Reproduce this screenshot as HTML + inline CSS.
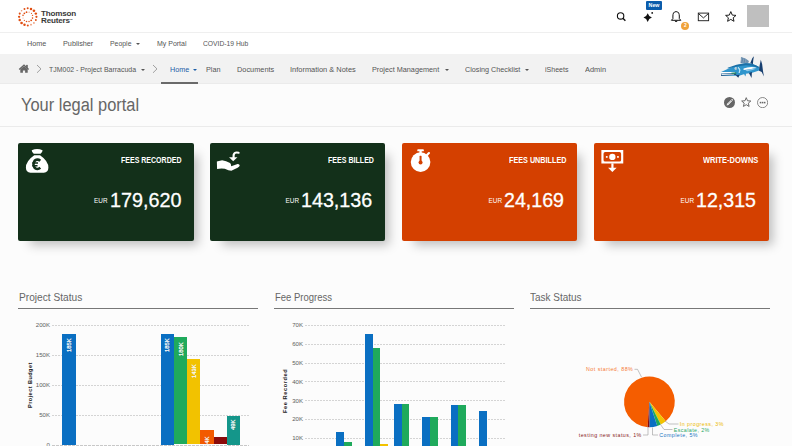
<!DOCTYPE html>
<html><head><meta charset="utf-8">
<style>
*{margin:0;padding:0;box-sizing:border-box}
html,body{width:792px;height:446px;overflow:hidden;background:#fcfcfc;font-family:"Liberation Sans",sans-serif}
.a{position:absolute;white-space:nowrap;line-height:1}
#hdr{position:absolute;left:0;top:0;width:792px;height:33px;background:#fff;border-bottom:1px solid #efefef}
#nav{position:absolute;left:0;top:33px;width:792px;height:21px;background:#fff}
#band{position:absolute;left:0;top:54px;width:792px;height:30px;background:#f2f2f2;border-bottom:1px solid #ebebeb}
#ttl{position:absolute;left:0;top:84px;width:792px;height:43px;background:#fcfcfc;border-bottom:1px solid #ebebeb}
.nv{font-size:7.8px;color:#555;top:39.7px;transform-origin:0 0}
.bc{font-size:7.8px;color:#555;top:65.5px;transform-origin:0 0}
.caret{position:absolute;width:0;height:0;border-left:2px solid transparent;border-right:2px solid transparent;border-top:2px solid #555}
.card{position:absolute;top:142.6px;width:175.6px;height:98px;border-radius:2px;box-shadow:8px 8px 10px -4px rgba(0,0,0,.25)}
.g{background:#13301a}
.o{background:#d44000}
.lab{font-weight:bold;color:#fff;top:155.4px;transform-origin:0 0}
.num{color:#fff;top:189.4px;-webkit-text-stroke:0.3px #fff;transform-origin:0 0}
.eur{font-size:6.4px;color:#fff;top:197.5px}
.sec{color:#666;top:292.1px;transform-origin:0 0}
.secl{position:absolute;top:308px;height:1px;background:#777;width:240px}
.yl{font-size:6.1px;color:#606060;text-align:right}
.grid{position:absolute;height:1px;background:repeating-linear-gradient(90deg,#d4d4d4 0 2px,transparent 2px 3px)}
.bar{position:absolute}
.vl{position:absolute;font-size:5.8px;color:#fff;letter-spacing:0.05px;text-shadow:0 0 1px rgba(0,0,0,.35);-webkit-text-stroke:0.25px #fff;transform-origin:0 0;transform:rotate(-90deg);white-space:nowrap;line-height:1}
.pl{font-size:6.3px}
</style></head><body>
<div id="hdr"></div>
<div id="nav"></div>
<div id="band"></div>
<div id="ttl"></div>

<!-- logo -->
<svg class="a" style="left:14px;top:4px" width="30" height="26" viewBox="0 0 515 446"><g fill="#e04e12"><circle cx="235" cy="72" r="17.5"/><circle cx="292" cy="85" r="21.2"/><circle cx="342" cy="115" r="22.5"/><circle cx="375" cy="165" r="21.2"/><circle cx="385" cy="220" r="18.8"/><circle cx="375" cy="275" r="16.2"/><circle cx="342" cy="325" r="15.0" opacity="0.6"/><circle cx="292" cy="355" r="15.0" opacity="0.6"/><circle cx="237" cy="370" r="17.5"/><circle cx="180" cy="355" r="21.2"/><circle cx="130" cy="325" r="22.5"/><circle cx="98" cy="275" r="21.2"/><circle cx="88" cy="220" r="20.0"/><circle cx="98" cy="165" r="17.5"/><circle cx="130" cy="115" r="13.8" opacity="0.6"/><circle cx="180" cy="85" r="16.2"/><circle cx="215" cy="140" r="15.0"/><circle cx="260" cy="140" r="11.2" opacity="0.5"/><circle cx="300" cy="160" r="10.0"/><circle cx="318" cy="195" r="12.5"/><circle cx="318" cy="242" r="13.8"/><circle cx="295" cy="280" r="16.2"/><circle cx="258" cy="300" r="12.5"/><circle cx="215" cy="300" r="13.8"/><circle cx="178" cy="280" r="11.2"/><circle cx="155" cy="240" r="10.0" opacity="0.5"/><circle cx="155" cy="195" r="13.8"/><circle cx="178" cy="160" r="15.0"/></g></svg>
<div class="a" style="left:41px;top:10.1px;font-size:8.1px;font-weight:bold;color:#3a3a3a;letter-spacing:-0.2px;line-height:7.2px">Thomson<br>Reuters<span style="font-size:3px;vertical-align:top">™</span></div>

<!-- header icons -->
<svg class="a" style="left:616px;top:11px" width="11" height="11" viewBox="616 11 11 11"><circle cx="620.6" cy="15.9" r="3.2" fill="none" stroke="#111" stroke-width="1.1"/><line x1="622.9" y1="18.2" x2="625.4" y2="20.7" stroke="#111" stroke-width="1.4"/></svg>
<svg class="a" style="left:642px;top:11px" width="12" height="12" viewBox="642 11 12 12"><path d="M647.7 13.3 Q648.7 16.6 651.9 17.6 Q648.7 18.6 647.7 21.9 Q646.7 18.6 643.5 17.6 Q646.7 16.6 647.7 13.3Z" fill="#111"/><circle cx="652.2" cy="12.9" r="0.9" fill="#111"/></svg>
<div class="a" style="left:645.9px;top:1.2px;width:16.3px;height:8.7px;background:#0b5cab;color:#fff;font-size:5.3px;font-weight:bold;text-align:center;line-height:8.7px;border-radius:1px">New</div>
<svg class="a" style="left:670px;top:10px" width="13" height="13" viewBox="670 10 13 13"><path d="M676.1 11.6 C673.4 11.6 672.9 14 672.9 16 L672.9 18.6 L671.4 20.3 L680.8 20.3 L679.3 18.6 L679.3 16 C679.3 14 678.8 11.6 676.1 11.6Z" fill="none" stroke="#111" stroke-width="1" stroke-linejoin="round"/><path d="M674.9 21 Q676.1 22.2 677.3 21" fill="#111" stroke="#111" stroke-width="0.9"/></svg>
<div class="a" style="left:681.3px;top:21.8px;width:8px;height:8px;border-radius:50%;background:#f0a23a;color:#fff;font-size:4.8px;font-weight:bold;text-align:center;line-height:8px">2</div>
<svg class="a" style="left:697px;top:12px" width="13" height="10" viewBox="697 12 13 10"><rect x="698.3" y="13.1" width="10.3" height="7.6" fill="none" stroke="#222" stroke-width="0.95"/><path d="M698.4 13.5 L703.45 17.9 L708.5 13.5" fill="none" stroke="#222" stroke-width="0.95"/></svg>
<svg class="a" style="left:725px;top:11px" width="12" height="11" viewBox="725 11 12 11"><path d="M730.8 11.6 L732.3 15.1 L736 15.4 L733.2 17.8 L734 21.3 L730.8 19.4 L727.6 21.3 L728.4 17.8 L725.6 15.4 L729.3 15.1Z" fill="none" stroke="#111" stroke-width="0.95" stroke-linejoin="round"/></svg>
<div class="a" style="left:747.1px;top:4.8px;width:22px;height:22.7px;background:#bfbfbf"></div>
<!-- nav -->
<div class="a nv" style="left:26.5px;transform:scaleX(0.928)">Home</div>
<div class="a nv" style="left:62.5px;transform:scaleX(0.932)">Publisher</div>
<div class="a nv" style="left:109.5px;transform:scaleX(0.885)">People</div>
<div class="caret" style="left:136px;top:43px"></div>
<div class="a nv" style="left:156.5px;transform:scaleX(0.896)">My Portal</div>
<div class="a nv" style="left:202.7px;transform:scaleX(0.864)">COVID-19 Hub</div>

<!-- breadcrumb band -->
<svg class="a" style="left:18px;top:63px" width="12" height="11" viewBox="18 63 12 11"><path d="M19.2 69.6 L24 65.1 L28.6 69.6" fill="none" stroke="#666" stroke-width="1.4" stroke-linejoin="miter"/><path d="M20.3 69.2 L24 65.9 L27.7 69.2 L27.7 72.8 L25.1 72.8 L25.1 70.4 L22.9 70.4 L22.9 72.8 L20.3 72.8Z" fill="#666"/><rect x="26.1" y="64.9" width="1.7" height="3" fill="#666"/></svg>
<svg class="a" style="left:36px;top:64px" width="6" height="10" viewBox="0 0 6 10"><path d="M1 1 L5 4.9 L1 8.8" fill="none" stroke="#8a8a8a" stroke-width="0.8"/></svg>
<div class="a bc" style="left:48.9px;transform:scaleX(0.893)">TJM002 - Project Barracuda</div>
<div class="caret" style="left:140.5px;top:69px"></div>
<svg class="a" style="left:151.5px;top:64px" width="6" height="10" viewBox="0 0 6 10"><path d="M1 1 L5 4.9 L1 8.8" fill="none" stroke="#8a8a8a" stroke-width="0.8"/></svg>
<div class="a bc" style="left:169.6px;color:#1c5ea8;transform:scaleX(0.923)">Home</div>
<div class="caret" style="left:193px;top:69px;border-top-color:#1c5ea8"></div>
<div class="a" style="left:161px;top:81.8px;width:36.6px;height:2px;background:#6a6a6a"></div>
<div class="a bc" style="left:205.8px;transform:scaleX(0.935)">Plan</div>
<div class="a bc" style="left:236.8px;transform:scaleX(0.943)">Documents</div>
<div class="a bc" style="left:290.2px;transform:scaleX(0.955)">Information &amp; Notes</div>
<div class="a bc" style="left:372.4px;transform:scaleX(0.934)">Project Management</div>
<div class="caret" style="left:444.6px;top:69px"></div>
<div class="a bc" style="left:464.6px;transform:scaleX(0.926)">Closing Checklist</div>
<div class="caret" style="left:524.5px;top:69px"></div>
<div class="a bc" style="left:545.2px;transform:scaleX(0.903)">iSheets</div>
<div class="a bc" style="left:585px;transform:scaleX(0.950)">Admin</div>

<!-- fish -->
<svg class="a" style="left:710px;top:50px" width="70" height="35" viewBox="0 0 792 396">
<path d="M345 150 L352 80 L400 95 L440 125 L430 150Z" fill="#5f84a6"/>
<path d="M352 85 L365 145 M375 92 L385 148 M398 100 L405 148 M418 110 L420 148" stroke="#9fbad0" stroke-width="6"/>
<path d="M455 150 L480 90 L497 72 L490 110 L485 160Z" fill="#163e6e"/>
<path d="M125 248 L230 200 Q300 165 400 150 Q480 145 560 195 L565 230 Q480 265 400 270 L330 290 L200 292 L125 290Z" fill="#2f95cc"/>
<path d="M200 200 Q300 160 400 150 Q480 145 560 195 L540 200 Q470 170 400 172 Q300 180 200 210Z" fill="#1b6fa6"/>
<path d="M560 180 L575 110 L590 160 L600 240 L610 300 L585 250 L555 235Z" fill="#173f70"/>
<path d="M125 250 L280 248 L290 262 L125 268Z" fill="#ffffff"/>
<path d="M125 268 L290 262 L300 280 L125 292Z" fill="#173f70"/>
<path d="M130 272 L270 268 L275 276 L130 284Z" fill="#e8f2f8"/>
<path d="M240 258 L295 252 L300 268 L245 272Z" fill="#2e8a6a"/>
<circle cx="292" cy="210" r="14" fill="#e9eef2"/>
<circle cx="295" cy="212" r="6" fill="#33506a"/>
<path d="M320 195 Q355 225 330 260 Q345 230 320 195Z" fill="#bfe6f6" stroke="#bfe6f6" stroke-width="10"/>
<path d="M380 210 Q450 180 530 200 Q450 222 380 225Z" fill="#ffffff"/>
<path d="M400 228 Q470 215 530 210 Q470 235 420 240Z" fill="#8fc8e8"/>
<path d="M290 285 L335 280 L320 315Z" fill="#173f70"/>
<path d="M440 260 L475 250 L470 318Z" fill="#173f70"/>
<path d="M380 260 L400 300 L410 262Z" fill="#2f95cc"/>
</svg>

<!-- title -->
<div class="a" style="left:21.2px;top:96.7px;font-size:17.6px;color:#666;transform-origin:0 0;transform:scaleX(0.934)">Your legal portal</div>
<svg class="a" style="left:724px;top:96.6px" width="11" height="11" viewBox="0 0 22 22"><circle cx="11" cy="11" r="11" fill="#666"/><path d="M5.2 16.8 L6.2 13.4 L13.6 6 L16 8.4 L8.6 15.8Z" fill="#fff"/><path d="M14.4 5.2 L15.2 4.4 Q16 3.8 16.8 4.4 L17.6 5.2 Q18.2 6 17.6 6.8 L16.8 7.6Z" fill="#fff"/><path d="M7 14.2 L14.6 6.8" stroke="#666" stroke-width="0.9"/></svg>
<svg class="a" style="left:741px;top:96.6px" width="10.5" height="10.5" viewBox="0 0 24 24"><path d="M12 1.5 L14.9 8.6 L22.5 9.2 L16.7 14.1 L18.5 21.6 L12 17.6 L5.5 21.6 L7.3 14.1 L1.5 9.2 L9.1 8.6Z" fill="none" stroke="#666" stroke-width="2.2" stroke-linejoin="round"/></svg>
<svg class="a" style="left:756.9px;top:96.6px" width="11.2" height="11.2" viewBox="0 0 22 22"><circle cx="11" cy="11" r="10" fill="none" stroke="#666" stroke-width="1.5"/><rect x="5.4" y="9.5" width="3" height="3" fill="#666"/><rect x="9.5" y="9.5" width="3" height="3" fill="#666"/><rect x="13.6" y="9.5" width="3" height="3" fill="#666"/></svg>

<!-- cards -->
<div class="card g" style="left:18.3px;width:175.3px"></div>
<div class="card g" style="left:210.2px;width:175.3px"></div>
<div class="card o" style="left:402.2px;width:175.2px"></div>
<div class="card o" style="left:594.2px;width:174.8px"></div>

<!-- card icons -->
<svg class="a" style="left:10px;top:134.4px" width="100" height="50" viewBox="0 0 792 396"><path d="M172 128 Q215 108 258 128 Q258 140 242 156 L188 156 Q172 140 172 128Z" fill="#fff"/><path d="M192 168 L238 168 Q306 215 304 268 Q303 305 268 306 L162 306 Q127 305 126 268 Q124 215 192 168Z" fill="#fff"/><path d="M240 212 Q228 202 215 203 Q190 205 186 240 Q190 275 215 277 Q228 278 240 268" fill="none" stroke="#13301a" stroke-width="20"/><path d="M176 230 L222 230 M176 251 L218 251" stroke="#13301a" stroke-width="11"/></svg>
<svg class="a" style="left:212px;top:146px" width="34" height="30" viewBox="0 0 505 446"><path d="M72 232 L150 212 Q210 225 268 252 Q285 262 285 300 L380 268 Q410 265 412 295 Q405 312 380 322 L295 366 Q250 368 190 338 Q130 328 75 342Z" fill="#fff"/><path d="M395 100 Q335 85 322 130 L320 172" fill="none" stroke="#fff" stroke-width="32" stroke-linecap="round"/><path d="M253 168 L378 168 L315 228Z" fill="#fff"/></svg>
<svg class="a" style="left:404px;top:144px" width="34" height="32" viewBox="0 0 474 446"><rect x="185" y="73" width="92" height="28" rx="12" fill="#fff"/><rect x="215" y="95" width="32" height="30" fill="#fff"/><circle cx="231" cy="252" r="137" fill="#fff"/><path d="M300 175 L348 127" stroke="#fff" stroke-width="30" stroke-linecap="round"/><rect x="217" y="165" width="28" height="85" rx="8" fill="#d44000"/><circle cx="231" cy="258" r="28" fill="#d44000"/></svg>
<svg class="a" style="left:596px;top:144px" width="34" height="32" viewBox="0 0 474 446"><path d="M75 85 L380 85 L380 272 L75 272Z M128 112 Q105 112 105 135 L105 222 Q105 245 128 245 L327 245 Q350 245 350 222 L350 135 Q350 112 327 112Z" fill="#fff" fill-rule="evenodd"/><circle cx="228" cy="180" r="44" fill="#fff"/><rect x="138" y="168" width="24" height="24" fill="#fff"/><rect x="294" y="168" width="24" height="24" fill="#fff"/><rect x="214" y="270" width="30" height="70" fill="#fff"/><path d="M168 332 L288 332 L228 392Z" fill="#fff"/></svg>

<div class="a lab" style="left:121.4px;font-size:9.4px;transform:scaleX(0.749)">FEES RECORDED</div>
<div class="a lab" style="left:327.9px;font-size:9.4px;transform:scaleX(0.754)">FEES BILLED</div>
<div class="a lab" style="left:508.5px;font-size:9.4px;transform:scaleX(0.771)">FEES UNBILLED</div>
<div class="a lab" style="left:702.7px;font-size:9.4px;transform:scaleX(0.798)">WRITE-DOWNS</div>

<div class="a eur" style="left:94px">EUR</div><div class="a num" style="left:109.6px;font-size:21px;transform:scaleX(0.942)">179,620</div>
<div class="a eur" style="left:285.5px">EUR</div><div class="a num" style="left:301.2px;font-size:21px;transform:scaleX(0.938)">143,136</div>
<div class="a eur" style="left:488.6px">EUR</div><div class="a num" style="left:504px;font-size:21px;transform:scaleX(0.934)">24,169</div>
<div class="a eur" style="left:680.6px">EUR</div><div class="a num" style="left:696px;font-size:21px;transform:scaleX(0.934)">12,315</div>

<!-- sections -->
<div class="a sec" style="left:18.5px;font-size:10.5px;transform:scaleX(0.969)">Project Status</div>
<div class="secl" style="left:18px"></div>
<div class="a sec" style="left:274.5px;font-size:10.5px;transform:scaleX(0.905)">Fee Progress</div>
<div class="secl" style="left:274px"></div>
<div class="a sec" style="left:529.6px;font-size:10.5px;transform:scaleX(0.95)">Task Status</div>
<div class="secl" style="left:529.5px"></div>

<!-- Project Status chart -->
<div class="grid" style="left:52px;width:197px;top:324.5px"></div>
<div class="grid" style="left:52px;width:197px;top:354.5px"></div>
<div class="grid" style="left:52px;width:197px;top:384.5px"></div>
<div class="grid" style="left:52px;width:197px;top:414.5px"></div>
<div class="grid" style="left:52px;width:197px;top:444.5px;background:repeating-linear-gradient(90deg,#c8c8c8 0 3px,transparent 3px 4px)"></div>
<div class="a yl" style="left:30px;width:20px;top:322.15px">200K</div>
<div class="a yl" style="left:30px;width:20px;top:352.15px">150K</div>
<div class="a yl" style="left:30px;width:20px;top:382.15px">100K</div>
<div class="a yl" style="left:30px;width:20px;top:412.15px">50K</div>
<div class="a yl" style="left:30px;width:20px;top:441.65px">0</div>
<div class="vl" style="left:27.6px;top:407.6px;color:#222;font-size:5.6px;font-weight:bold;letter-spacing:0.43px;text-shadow:none;-webkit-text-stroke:0">Project Budget</div>
<div class="bar" style="left:62.3px;width:13.4px;top:334px;height:110.5px;background:#0a6fc2"></div>
<div class="bar" style="left:160.7px;width:13.4px;top:334px;height:110.5px;background:#0a6fc2"></div>
<div class="bar" style="left:174.1px;width:13.2px;top:337.4px;height:107.1px;background:#1faa5c"></div>
<div class="bar" style="left:187.3px;width:13.1px;top:359.4px;height:85.1px;background:#f2c200"></div>
<div class="bar" style="left:200.4px;width:13.4px;top:430.4px;height:14.1px;background:#f25a00"></div>
<div class="bar" style="left:213.8px;width:13.1px;top:437.4px;height:7.1px;background:#8a0a0a"></div>
<div class="bar" style="left:226.9px;width:13.1px;top:415.5px;height:29.0px;background:#14968a"></div>
<div class="vl" style="left:66.7px;top:352.2px">185K</div>
<div class="vl" style="left:165.2px;top:352.2px">185K</div>
<div class="vl" style="left:178.7px;top:355.7px">180K</div>
<div class="vl" style="left:191.7px;top:377.7px">143K</div>
<div class="vl" style="left:204.7px;top:447.2px">24K</div>
<div class="vl" style="left:231.4px;top:430.2px">49K</div>

<!-- Fee Progress chart -->
<div class="grid" style="left:304.5px;width:200.5px;top:324.5px"></div>
<div class="grid" style="left:304.5px;width:200.5px;top:343.5px"></div>
<div class="grid" style="left:304.5px;width:200.5px;top:362.5px"></div>
<div class="grid" style="left:304.5px;width:200.5px;top:381px"></div>
<div class="grid" style="left:304.5px;width:200.5px;top:400px"></div>
<div class="grid" style="left:304.5px;width:200.5px;top:418.8px"></div>
<div class="grid" style="left:304.5px;width:200.5px;top:437.5px"></div>
<div class="a yl" style="left:283px;width:20px;top:322.15px">70K</div>
<div class="a yl" style="left:283px;width:20px;top:341.15px">60K</div>
<div class="a yl" style="left:283px;width:20px;top:360.15px">50K</div>
<div class="a yl" style="left:283px;width:20px;top:378.65px">40K</div>
<div class="a yl" style="left:283px;width:20px;top:397.65px">30K</div>
<div class="a yl" style="left:283px;width:20px;top:416.45px">20K</div>
<div class="a yl" style="left:283px;width:20px;top:435.15px">10K</div>
<div class="vl" style="left:283.3px;top:413.2px;color:#222;font-size:5.7px;font-weight:bold;letter-spacing:0.55px;text-shadow:none;-webkit-text-stroke:0">Fee Recorded</div>
<div class="bar" style="left:336.3px;width:7.5px;top:432px;height:20px;background:#0a6fc2"></div>
<div class="bar" style="left:343.8px;width:8px;top:442px;height:20px;background:#1faa5c"></div>
<div class="bar" style="left:365px;width:7.8px;top:334px;height:120px;background:#0a6fc2"></div>
<div class="bar" style="left:372.8px;width:7.4px;top:347.8px;height:120px;background:#1faa5c"></div>
<div class="bar" style="left:380.3px;width:7.7px;top:443.6px;height:20px;background:#f2c200"></div>
<div class="bar" style="left:394px;width:7.5px;top:403.6px;height:60px;background:#0a6fc2"></div>
<div class="bar" style="left:401.5px;width:7.5px;top:403.6px;height:60px;background:#1faa5c"></div>
<div class="bar" style="left:422px;width:7.8px;top:416.7px;height:60px;background:#0a6fc2"></div>
<div class="bar" style="left:429.8px;width:8px;top:416.7px;height:60px;background:#1faa5c"></div>
<div class="bar" style="left:450.7px;width:7.7px;top:405px;height:60px;background:#0a6fc2"></div>
<div class="bar" style="left:458.4px;width:7.9px;top:405.2px;height:60px;background:#1faa5c"></div>
<div class="bar" style="left:479px;width:8px;top:411px;height:60px;background:#0a6fc2"></div>

<!-- Task Status pie -->
<svg class="a" style="left:570px;top:355px" width="170" height="91" viewBox="570 355 170 91" id="pie">
<path d="M649.4 401.8 L647.63 427.14 A25.4 25.4 0 1 1 665.73 421.26Z" fill="#f55d00"/>
<path d="M649.4 401.8 L665.73 421.26 A25.4 25.4 0 0 1 660.77 424.51Z" fill="#f2c200"/>
<path d="M649.4 401.8 L660.77 424.51 A25.4 25.4 0 0 1 657.25 425.96Z" fill="#1faa5c"/>
<path d="M649.4 401.8 L657.25 425.96 A25.4 25.4 0 0 1 649.40 427.20Z" fill="#0a6fc2"/>
<path d="M649.4 401.8 L649.40 427.20 A25.4 25.4 0 0 1 647.63 427.14Z" fill="#8a0a0a"/>
<g fill="none" stroke="#999" stroke-width="0.6">
<path d="M634.5 369.3 L637.5 369.3 L641.5 377"/>
<path d="M665 421 L669 424 L678.5 424"/>
<path d="M660.5 424.5 L664 429.5 L672.5 429.5"/>
<path d="M652.5 427.5 L652.5 435 L658 435"/>
<path d="M648 427.5 L648 435 L643 435"/>
</g>
<text x="586" y="371.3" font-size="5.3" fill="#f67a36" font-family="Liberation Sans" letter-spacing="0.49">Not started, 88%</text>
<text x="679.8" y="426.0" font-size="5.3" fill="#ebb800" font-family="Liberation Sans" letter-spacing="0.47">In progress, 3%</text>
<text x="673.7" y="431.5" font-size="5.3" fill="#2aa865" font-family="Liberation Sans" letter-spacing="0.43">Escalate, 2%</text>
<text x="659.2" y="437.0" font-size="5.3" fill="#2274c2" font-family="Liberation Sans" letter-spacing="0.46">Complete, 5%</text>
<text x="578.8" y="437.0" font-size="5.3" fill="#8a1c1c" font-family="Liberation Sans" letter-spacing="0.45">testing new status, 1%</text>
</svg>

</body></html>
